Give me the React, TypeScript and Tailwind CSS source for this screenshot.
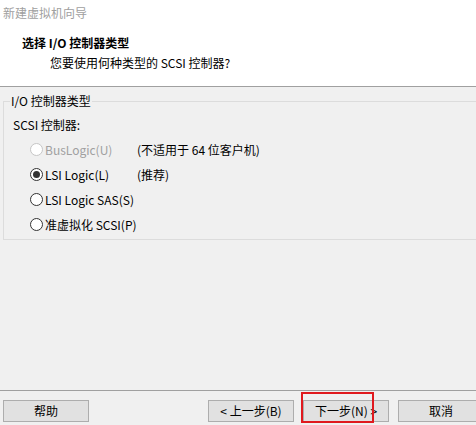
const font = "font-['Noto_Sans_CJK_SC','Microsoft_YaHei',sans-serif]";

interface RadioProps {
  label: string;
  checked?: boolean;
  disabled?: boolean;
  note?: string;
}

const Radio = ({ label, checked, disabled, note }: RadioProps) => (
  <div className="flex items-center h-[25px]">
    <div className="flex items-center shrink-0 w-[119px] pl-[26px]">
      <span
        className={`flex shrink-0 items-center justify-center w-[13px] h-[13px] rounded-full border bg-white ${
          disabled ? 'border-[#c6c6c6]' : 'border-[#333333]'
        }`}
      >
        {checked && <span className="w-[7px] h-[7px] rounded-full bg-[#333333]" />}
      </span>
      <span className={`ml-[2px] whitespace-nowrap ${disabled ? 'text-[#a0a0a0]' : 'text-black'}`}>{label}</span>
    </div>
    {note && <span className="ml-[14px] whitespace-nowrap text-black">{note}</span>}
  </div>
);

const Button = ({ children, className = '' }: { children: React.ReactNode; className?: string }) => (
  <button className={`shrink-0 w-[86px] h-[22px] bg-[#e1e1e1] border border-[#adadad] text-[12px] leading-[20px] text-black text-center ${className}`}>
    {children}
  </button>
);

export default function App() {
  return (
    <div className={`w-[476px] h-[425px] overflow-hidden flex flex-col bg-[#f0f0f0] text-[12px] leading-[16px] ${font}`}>
      <div className="h-[87px] shrink-0 bg-white border-b border-[#a0a0a0]">
        <div className="pt-[5px] pl-[3px] text-[#a0a0a0]">新建虚拟机向导</div>
        <div className="mt-[14px] pl-[22px] font-bold text-black">选择 I/O 控制器类型</div>
        <div className="mt-[4px] pl-[50px] text-black">您要使用何种类型的 SCSI 控制器?</div>
      </div>

      <div className="flex-1">
        <fieldset className="mt-[6px] ml-[3px] w-[490px] border border-[#dcdcdc] px-0 pb-[2px]">
          <legend className="ml-[6px] px-[1px] text-black">I/O 控制器类型</legend>
          <div className="pl-[9px] pt-[8px] text-black">SCSI 控制器:</div>
          <div className="mt-[4px]">
            <Radio label="BusLogic(U)" disabled note="(不适用于 64 位客户机)" />
            <Radio label="LSI Logic(L)" checked note="(推荐)" />
            <Radio label="LSI Logic SAS(S)" />
            <Radio label="准虚拟化 SCSI(P)" />
          </div>
        </fieldset>
      </div>

      <div className="relative h-[35px] shrink-0 border-t border-[#a0a0a0] pt-[9px] flex">
        <Button className="ml-[3px]">帮助</Button>
        <Button className="ml-[119px]">&lt; 上一步(B)</Button>
        <Button className="ml-[9px]">下一步(N) &gt;</Button>
        <Button className="ml-[9px]">取消</Button>
        <div className="absolute left-[301px] top-[1px] w-[73px] h-[31px] border-2 border-[#e0191e]" />
      </div>
    </div>
  );
}
